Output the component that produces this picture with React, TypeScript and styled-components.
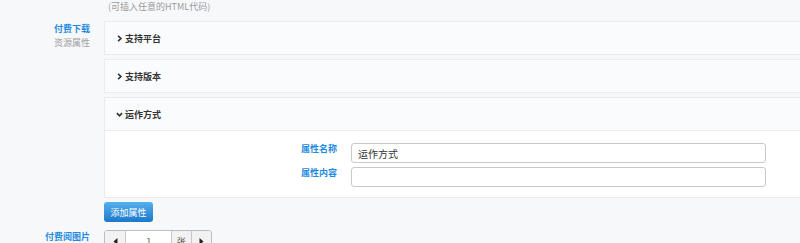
import React from 'react';
import styled, { createGlobalStyle } from 'styled-components';

const GlobalStyle = createGlobalStyle`
  html, body {
    margin: 0;
    padding: 0;
    background: #f7f8fa;
    overflow: hidden;
    font-family: 'Noto Sans CJK SC', 'Noto Sans', sans-serif;
    color: #333;
  }
`;

const Page = styled.div`
    width: 900px;
    display: flex;
    flex-direction: column;
  `,
  Note = styled.div`
    height: 15px;
    line-height: 13px;
    padding-left: 108px;
    font-size: 9px;
    color: #9a9a9a;
  `,
  Row = styled.div<{ $top?: number }>`
    display: grid;
    grid-template-columns: 104px 1fr;
    margin-top: ${(p) => p.$top || 0}px;
  `,
  LabelCell = styled.div<{ $pad?: number }>`
    display: flex;
    flex-direction: column;
    align-items: flex-end;
    padding-right: 14px;
    padding-top: ${(p) => (p.$pad === undefined ? 1 : p.$pad)}px;
    font-size: 9px;
    line-height: 14px;
  `,
  BlueLabel = styled.span`
    color: #1f8be0;
    font-weight: 700;
  `,
  SubLabel = styled.span`
    color: #a0a0a0;
  `,
  Content = styled.div`
    display: flex;
    flex-direction: column;
  `,
  Panel = styled.div`
    background: #fafbfc;
    border: 1px solid #e9ebee;
    border-right: none;
    margin-bottom: 4px;
  `,
  PanelHead = styled.div`
    height: 32px;
    display: flex;
    align-items: center;
    gap: 2px;
    padding-left: 11px;
    font-size: 9px;
    font-weight: 700;
    color: #333;
  `,
  PanelBody = styled.div`
    background: #fff;
    border-top: 1px solid #e9ebee;
    padding: 12px 0 10px;
    display: grid;
    grid-template-columns: 232px 415px;
    column-gap: 14px;
    row-gap: 4px;
  `,
  FieldLabel = styled.label`
    text-align: right;
    font-size: 9px;
    font-weight: 700;
    color: #1f8be0;
    line-height: 12px;
  `,
  TextInput = styled.input`
    box-sizing: border-box;
    height: 20px;
    width: 100%;
    border: 1px solid #c8c8c8;
    border-radius: 3px;
    padding: 0 6px;
    font-family: inherit;
    font-size: 10px;
    color: #333;
    outline: none;
    background: #fff;
  `,
  AddButton = styled.button`
    align-self: flex-start;
    height: 20px;
    width: 49px;
    padding: 0;
    border: none;
    border-radius: 3px;
    background: linear-gradient(to bottom, #55b0ec, #1e78cc);
    color: #fff;
    font-family: inherit;
    font-size: 9px;
  `,
  Pager = styled.div`
    display: flex;
    height: 20px;
    border: 1px solid #bdbdbd;
    border-radius: 3px;
    width: 106px;
    overflow: hidden;
    background: #fff;
  `,
  PagerCell = styled.div<{ $w: number; $grey?: boolean }>`
    width: ${(p) => p.$w}px;
    display: flex;
    align-items: center;
    justify-content: center;
    font-size: 9px;
    color: #555;
    background: ${(p) => (p.$grey ? '#f2f2f2' : '#fff')};
    & + & {
      border-left: 1px solid #c8c8c8;
    }
  `;

function Caret({ open }: { open?: boolean }) {
  return (
    <svg width="7" height="7" viewBox="0 0 6 6">
      <path
        d={open ? 'M0.8 1.8 L3 4.2 L5.2 1.8' : 'M1.8 0.8 L4.2 3 L1.8 5.2'}
        fill="none"
        stroke="#333"
        strokeWidth="1.4"
      />
    </svg>
  );
}

function Tri({ dir }: { dir: 'l' | 'r' }) {
  return (
    <svg width="5" height="7" viewBox="0 0 5 7">
      <path d={dir === 'l' ? 'M4.5 0 L0.5 3.5 L4.5 7 Z' : 'M0.5 0 L4.5 3.5 L0.5 7 Z'} fill="#222" />
    </svg>
  );
}

export default function App(): JSX.Element {
  return (
    <>
      <GlobalStyle />
      <Page>
        <Note>(可插入任意的HTML代码)</Note>
        <Row $top={6}>
          <LabelCell>
            <BlueLabel>付费下载</BlueLabel>
            <SubLabel>资源属性</SubLabel>
          </LabelCell>
          <Content>
            <Panel>
              <PanelHead>
                <Caret />
                支持平台
              </PanelHead>
            </Panel>
            <Panel>
              <PanelHead>
                <Caret />
                支持版本
              </PanelHead>
            </Panel>
            <Panel>
              <PanelHead>
                <Caret open />
                运作方式
              </PanelHead>
              <PanelBody>
                <FieldLabel>属性名称</FieldLabel>
                <TextInput defaultValue="运作方式" />
                <FieldLabel>属性内容</FieldLabel>
                <TextInput defaultValue="" />
              </PanelBody>
            </Panel>
            <AddButton>添加属性</AddButton>
          </Content>
        </Row>
        <Row $top={8}>
          <LabelCell $pad={0}>
            <BlueLabel>付费阅图片</BlueLabel>
          </LabelCell>
          <Content>
            <Pager>
              <PagerCell $w={21} $grey>
                <Tri dir="l" />
              </PagerCell>
              <PagerCell $w={46}>1</PagerCell>
              <PagerCell $w={19} $grey>
                张
              </PagerCell>
              <PagerCell $w={20} $grey>
                <Tri dir="r" />
              </PagerCell>
            </Pager>
          </Content>
        </Row>
      </Page>
    </>
  );
}
